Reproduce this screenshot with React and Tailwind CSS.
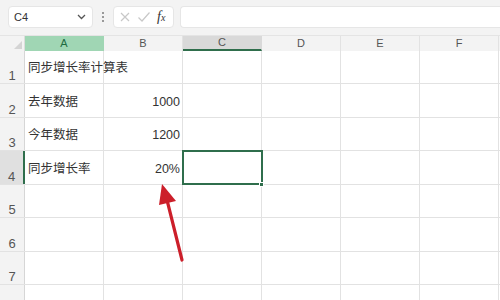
import React from "react";

const cols = ["A", "B", "C", "D", "E", "F"];
const rowH = [33, 34, 33, 34, 33, 34, 33, 34];
const data = {
  1: { A: "同步增长率计算表" },
  2: { A: "去年数据", B: "1000" },
  3: { A: "今年数据", B: "1200" },
  4: { A: "同步增长率", B: "20%" },
};

export default function App() {
  return (
    <div
      className="relative w-[500px] h-[300px] overflow-hidden bg-white"
      style={{ fontFamily: '"Liberation Sans", "Noto Sans CJK SC", sans-serif' }}
    >
      {/* formula bar */}
      <div className="h-[36px] bg-[#f3f3f3] flex items-start pt-[6px] pl-[8px] gap-0 border-b border-[#e4e4e4]">
        <div className="w-[85px] h-[22px] bg-white rounded-[4px] border border-[#e6e6e6] flex items-center justify-between pl-[5px] pr-[6px]">
          <span className="text-[11px] text-[#333]">C4</span>
          <svg width="9" height="6" viewBox="0 0 9 6">
            <path d="M1 1 L4.5 4.5 L8 1" fill="none" stroke="#555" strokeWidth="1.3" />
          </svg>
        </div>
        <div className="w-[20px] h-[22px] flex flex-col items-center justify-center gap-[2px]">
          <div className="w-[2px] h-[2px] bg-[#999]" />
          <div className="w-[2px] h-[2px] bg-[#999]" />
          <div className="w-[2px] h-[2px] bg-[#999]" />
        </div>
        <div className="w-[61px] h-[22px] bg-white rounded-[4px] border border-[#e6e6e6] flex items-center pl-[5px] gap-[6px]">
          <svg width="12" height="12" viewBox="0 0 12 12">
            <path d="M2 2 L10 10 M10 2 L2 10" stroke="#c8c8c8" strokeWidth="1.2" />
          </svg>
          <svg width="14" height="12" viewBox="0 0 14 12">
            <path d="M1.5 6.5 L5 10 L12.5 1.5" fill="none" stroke="#c8c8c8" strokeWidth="1.2" />
          </svg>
          <span
            className="text-[14px] italic text-[#333] leading-none"
            style={{ fontFamily: '"Liberation Serif", serif' }}
          >
            f<span className="text-[10px]">x</span>
          </span>
        </div>
        <div className="ml-[6px] flex-1 h-[22px] bg-white rounded-l-[4px] border border-[#e6e6e6] border-r-0" />
      </div>

      {/* column header */}
      <div className="flex h-[15px] bg-[#f3f3f3]">
        <div className="relative w-[25px] border-r border-[#dcdcdc]">
          <svg className="absolute right-[2px] bottom-[2px]" width="8" height="8" viewBox="0 0 8 8">
            <polygon points="8,0 8,8 0,8" fill="#d4d4d4" />
          </svg>
        </div>
        {cols.map((c) => {
          const isA = c === "A";
          const isC = c === "C";
          return (
            <div
              key={c}
              className={
                "w-[79px] flex items-center justify-center text-[11px] border-r " +
                (isA
                  ? "bg-[#a0d6b4] text-[#1e6b40] border-[#a0d6b4]"
                  : isC
                  ? "bg-[#d9d9d9] text-[#555] border-b-2 border-b-[#2f6e4c] border-r-[#d9d9d9]"
                  : "text-[#555] border-[#e2e2e2]")
              }
            >
              {c}
            </div>
          );
        })}
      </div>

      {/* rows */}
      {rowH.map((h, i) => {
        const r = i + 1;
        const isR4 = r === 4;
        return (
          <div key={r} className="flex border-b border-[#e2e2e2]" style={{ height: h }}>
            <div
              className={
                "w-[25px] flex items-end justify-center pb-[1px] leading-none text-[13px] text-[#555] " +
                (isR4
                  ? "bg-[#e0e0e0] border-r-2 border-[#2f6e4c]"
                  : "bg-[#f3f3f3] border-r border-[#d6d6d6]")
              }
            >
              {r <= 7 ? r : ""}
            </div>
            {cols.map((c) => {
              const v = data[r] && data[r][c];
              const sel = r === 4 && c === "C";
              const num = c === "B";
              return (
                <div
                  key={c}
                  className={
                    "relative w-[79px] flex items-center text-[12.5px] text-[#333] border-r border-[#e2e2e2] " +
                    (num ? "justify-end pr-[2px] " : "pl-[3px] ") +
                    (sel ? "outline-2 outline-[#2f6e4c] -outline-offset-1 z-10" : "")
                  }
                >
                  {v && <span className="whitespace-nowrap mt-[3px]">{v}</span>}
                  {sel && (
                    <div className="absolute right-[-3px] bottom-[-3px] w-[5px] h-[5px] bg-[#2f6e4c] border border-white" />
                  )}
                </div>
              );
            })}
          </div>
        );
      })}

      {/* red arrow annotation */}
      <svg className="absolute left-0 top-0 pointer-events-none" width="500" height="300">
        <line x1="182" y1="260" x2="167" y2="200" stroke="#cc1f2a" strokeWidth="3.2" strokeLinecap="round" />
        <polygon points="162,184 159,205 176,201" fill="#cc1f2a" />
      </svg>
    </div>
  );
}
